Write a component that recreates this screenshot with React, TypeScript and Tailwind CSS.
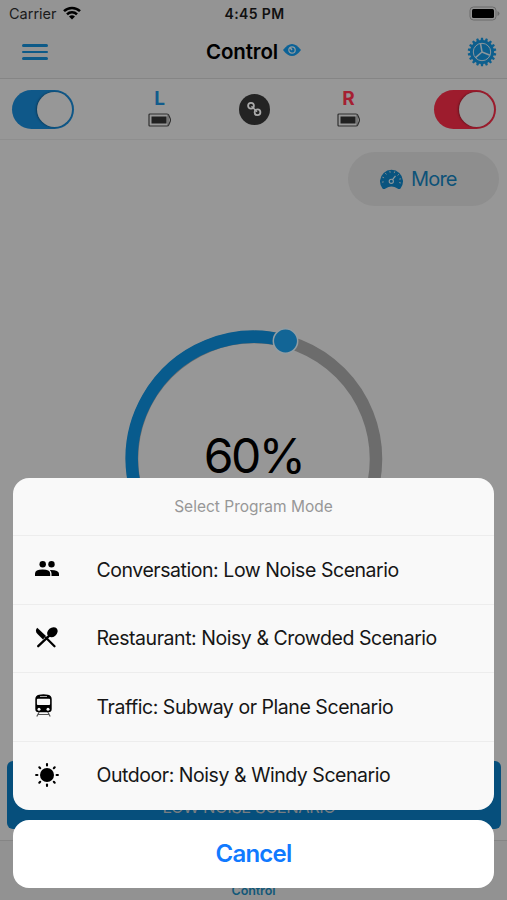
import type { ReactNode } from "react";

function Toggle({ color }: { color: string }) {
  return (
    <div className={`flex h-[39px] w-[62px] items-center justify-end rounded-full pr-[2.5px] ${color}`}>
      <div className="size-[35px] rounded-full bg-[#979797] shadow-[-1px_0_2px_rgba(0,0,0,0.35)]" />
    </div>
  );
}

function Side({ label, color }: { label: string; color: string }) {
  return (
    <div className="flex w-6 flex-col items-center">
      <span className={`text-[19px] leading-[20px] font-bold ${color}`}>{label}</span>
      <svg className="mt-[4px] mb-[2px] h-[14px] w-[24px]" viewBox="0 0 24 14" fill="none">
        <path d="M2 1h17q1.300 0 1.800 1.300L22.400 6v2l-1.600 3.700Q20.300 13 19 13H2Q1 13 1 12V2q0-1 1-1z" stroke="#303030" strokeWidth="1.200" />
        <path d="M20 2v10" stroke="#444" strokeWidth=".8" />
        <rect x="3.500" y="3.500" width="15" height="7" fill="#202020" />
      </svg>
    </div>
  );
}

function Mode({ icon, text }: { icon: ReactNode; text: string }) {
  return (
    <div className="flex h-[68.5px] items-center border-t border-[#ededed] pt-px pl-[22px]">
      <div className="flex w-[61.5px] shrink-0 items-center text-black">{icon}</div>
      <span className="text-[19.5px] tracking-[-0.45px] whitespace-nowrap text-[#161616]">{text}</span>
    </div>
  );
}

function Gear() {
  const teeth = Array.from({ length: 18 }, (_, i) => i * 20);
  return (
    <svg className="size-[30px] justify-self-end" viewBox="0 0 30 30">
      <g fill="#0d5f8e">
        <circle cx="15" cy="15" r="12" />
        {teeth.map((a) => (
          <path key={a} d="M13.500 4 14 .700h2L16.500 4z" transform={`rotate(${a} 15 15)`} />
        ))}
      </g>
      <g fill="none" stroke="#8b969c" strokeWidth="1.500">
        <circle cx="15" cy="15" r="8.700" strokeWidth="1" />
        <path d="M15 15 13.500 6.500M15 15l-6.500 5.600M15 15l8 3.300" />
      </g>
    </svg>
  );
}

function Gauge() {
  const ticks = [-100, -70, -40, -10, 20, 50, 80, 105];
  return (
    <svg className="h-[22px] w-[25px]" viewBox="0 0 25 22" fill="none">
      <path d="M3.500 20.500A11.500 11.500 0 1 1 21.500 20.500Q20 21.500 18.500 20.500 12.500 16.500 6.500 20.500 5 21.500 3.500 20.500z" fill="#09547f" />
      {ticks.map((a) => (
        <path key={a} d="M12.500 2.800v1.800" stroke="#80898e" strokeWidth=".9" transform={`rotate(${a} 12.500 12.500)`} />
      ))}
      <circle cx="12.300" cy="13.300" r="2.100" stroke="#8e989c" strokeWidth="1.100" />
      <path d="m13.500 11.700 3-3.900" stroke="#8e989c" strokeWidth="1.200" />
    </svg>
  );
}

function People() {
  return (
    <svg className="mb-[3px] h-[15px] w-[24px]" viewBox="0 0 24 15" fill="currentColor">
      <circle cx="7.700" cy="3.300" r="3.200" />
      <circle cx="16.500" cy="3.300" r="3.200" />
      <path d="M0 15v-2.200Q0 8.600 7.600 8.600T15.200 12.800V15zM16.500 15v-2.500q0-2-1.700-3.600Q24 8.700 24 12.800V15z" />
    </svg>
  );
}

function Cutlery() {
  return (
    <svg className="mb-[2px] h-[21px] w-[24px]" viewBox="0 0 24 21">
      <path d="m3.200 19.200 13-12.400M19.500 19.200 11 10.800" stroke="currentColor" strokeWidth="2.300" strokeLinecap="round" />
      <path d="M2.200.7 11 9 8 12.400 2.500 7Q-.5 4 2.200.7z" fill="currentColor" />
      <ellipse cx="17.400" cy="5.200" rx="5.700" ry="4.500" transform="rotate(-40 17.400 5.200)" fill="currentColor" />
    </svg>
  );
}

function Train() {
  return (
    <svg className="mb-[3px] h-[23px] w-[17px]" viewBox="0 0 17 23">
      <path d="M4 .8Q8.500-.4 13 .8 16.700 1.500 16.700 5v10q0 3.300-3.300 3.300H3.600Q.3 18.300.3 15V5Q.3 1.500 4 .8z" fill="currentColor" />
      <path d="M5 2.500h7" stroke="#aaa" strokeWidth="1" />
      <rect x="1.900" y="4.700" width="13.200" height="6.300" rx="1" fill="#f9f9f9" />
      <circle cx="4" cy="15.200" r="1.500" fill="#f9f9f9" />
      <circle cx="13" cy="15.200" r="1.500" fill="#f9f9f9" />
      <path d="m4.200 18-2.400 4.500M12.800 18l2.400 4.500M3 20.500h11" fill="none" stroke="#555" strokeWidth="1.200" />
    </svg>
  );
}

function Sun() {
  const rays = [0, 45, 90, 135, 180, 225, 270, 315];
  return (
    <svg className="mb-[2px] size-[24px]" viewBox="0 0 24 24">
      <circle cx="12" cy="12" r="7" fill="currentColor" />
      {rays.map((a) => (
        <path key={a} d="M12 1.100v1.300" stroke="currentColor" strokeWidth="2.100" strokeLinecap="round" transform={`rotate(${a} 12 12)`} />
      ))}
    </svg>
  );
}

export default function App() {
  return (
    <div className="relative flex h-[900px] w-full flex-col overflow-hidden bg-[#979797] font-['Inter','Liberation_Sans',sans-serif]">
      <header className="h-[79px] shrink-0 border-b border-[#858585] bg-[#949494]">
        <div className="grid h-[27px] grid-cols-3 items-center pr-[7px] pl-[9px]">
          <div className="flex items-center gap-[6px] text-[14.5px] text-[#1b1b1b]">
            <span>Carrier</span>
            <svg className="mb-[2px] h-[14px] w-[18px]" viewBox="0 0 18 14" fill="none" stroke="#000" strokeWidth="2.500">
              <path d="M1 5.200a11.300 11.300 0 0 1 16 0M4 8.300a7 7 0 0 1 10 0" />
              <path d="M9 13.600 6 10.600a4.300 4.300 0 0 1 6 0z" fill="#000" stroke="none" />
            </svg>
          </div>
          <span className="text-center text-[14px] font-semibold tracking-[0.35px] whitespace-nowrap text-[#111]">4:45 PM</span>
          <svg className="h-[15px] w-[31px] justify-self-end" viewBox="0 0 31 15">
            <rect x="1" y="1" width="26" height="13" rx="3.500" fill="none" stroke="#6b6b6b" />
            <rect x="3" y="3" width="22" height="9" rx="1.500" fill="#000" />
            <path d="M28.500 5v5q2-1 2-2.500T28.500 5z" fill="#6b6b6b" />
          </svg>
        </div>
        <div className="flex h-[50px] items-center justify-between pr-[10px] pl-[22px]">
          <div className="flex w-[26px] flex-col gap-[4px]">
            <div className="h-[2.5px] rounded-full bg-[#0d5a88]" />
            <div className="h-[2.5px] rounded-full bg-[#0d5a88]" />
            <div className="h-[2.5px] rounded-full bg-[#0d5a88]" />
          </div>
          <div className="mr-[8px] flex items-center justify-center gap-[5px]">
            <span className="text-[20.5px] font-semibold tracking-[-0.1px] text-black">Control</span>
            <svg className="mb-[4px] h-[12px] w-[18px]" viewBox="0 0 18 12" fill="none">
              <path d="M0 6Q9-6 18 6 9 18 0 6z" fill="#0b6297" />
              <circle cx="9" cy="6" r="3.200" stroke="#929b9f" strokeWidth="1.200" />
              <path d="M9 6 7.300 3.800" stroke="#929b9f" strokeWidth="1.500" />
            </svg>
          </div>
          <Gear />
        </div>
      </header>

      <section className="flex h-[61px] shrink-0 items-center justify-between border-b border-[#8e8e8e] pr-[11px] pl-[12px]">
        <Toggle color="bg-[#0f5889]" />
        <div className="flex w-[213px] items-center justify-between">
          <Side label="L" color="text-[#125c8c]" />
          <div className="flex size-[31px] items-center justify-center rounded-full bg-[#232323]">
            <svg className="size-[19px]" viewBox="0 0 19 19" fill="none" stroke="#aaa" strokeWidth="1.800">
              <circle cx="6" cy="5.700" r="2.900" />
              <circle cx="12.500" cy="12.300" r="2.900" />
              <path d="m6.500 6.200 5.500 5.600" strokeWidth="1.400" />
            </svg>
          </div>
          <Side label="R" color="text-[#a51f32]" />
        </div>
        <Toggle color="bg-[#9d1c2d]" />
      </section>

      <div className="flex h-[66px] shrink-0 justify-end pt-[12px] pr-[8px]">
        <div className="flex h-[54px] w-[151px] items-center gap-[7px] rounded-full bg-[#8e8e8e] pl-[31px]">
          <Gauge />
          <span className="text-[20px] tracking-[-0.8px] text-[#0d5278]">More</span>
        </div>
      </div>

      <div className="mt-[114px] grid h-[278px] shrink-0 place-items-center">
        <svg className="col-start-1 row-start-1 size-[278px]" viewBox="0 0 278 278" fill="none">
          <circle cx="139" cy="139" r="122" stroke="#6c6c6c" strokeWidth="12.500" />
          <path d="M52.700 225.300A122 122 0 0 1 170.500 21" stroke="#085b8d" strokeWidth="12.500" />
          <circle cx="170.500" cy="21" r="12.200" fill="#126596" stroke="#929da3" strokeWidth="1.500" />
        </svg>
        <span className="col-start-1 row-start-1 mb-[7px] text-[48px] leading-none tracking-[-2.5px] text-black">60%</span>
      </div>

      <div className="mr-[6px] ml-[7px] mt-[163px] flex h-[68px] shrink-0 items-end justify-center rounded-[6px] bg-[#064f7c] pb-[9px]">
        <span className="mr-[10px] text-[16.5px] tracking-[-0.45px] text-[#777d81]">LOW NOISE SCENARIO</span>
      </div>
      <footer className="mt-[11px] flex grow items-end justify-center border-t border-[#858585] bg-[#929292]">
        <span className="text-[12.5px] leading-[18px] font-semibold tracking-[-0.1px] text-[#115879]">Control</span>
      </footer>

      <div className="absolute inset-x-[13px] bottom-[12.5px] flex flex-col gap-[10px]">
        <div className="h-[332px] overflow-hidden rounded-[16px] bg-[#f9f9f9]">
          <div className="flex h-[57.5px] items-center justify-center pt-px text-[15.5px] text-[#979797]">Select Program Mode</div>
          <Mode icon={<People />} text="Conversation: Low Noise Scenario" />
          <Mode icon={<Cutlery />} text="Restaurant: Noisy & Crowded Scenario" />
          <Mode icon={<Train />} text="Traffic: Subway or Plane Scenario" />
          <Mode icon={<Sun />} text="Outdoor: Noisy & Windy Scenario" />
        </div>
        <div className="flex h-[68px] items-center justify-center rounded-[16px] bg-white text-[24px] font-semibold tracking-[-0.8px] text-[#117aff]">Cancel</div>
      </div>
    </div>
  );
}
